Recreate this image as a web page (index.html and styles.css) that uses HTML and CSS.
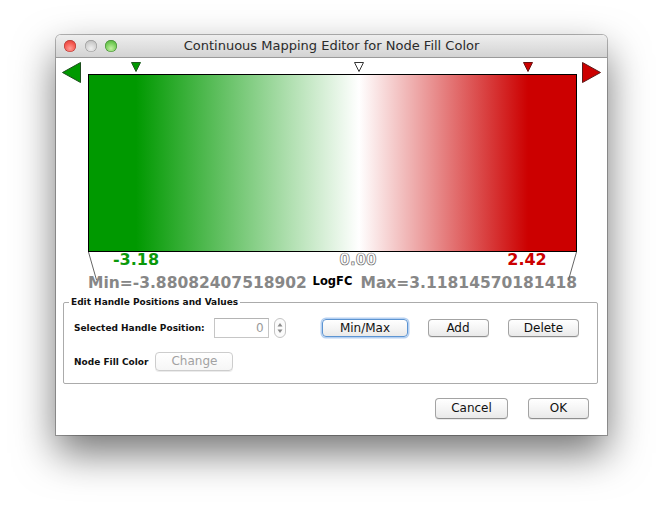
FILE: index.html
```html
<!DOCTYPE html>
<html>
<head>
<meta charset="utf-8">
<link rel="stylesheet" href="styles.css">
</head>
<body>
<div class="window">
  <div class="titlebar">
    <div class="lights">
      <span class="light red"></span>
      <span class="light gray"></span>
      <span class="light green"></span>
    </div>
    <div class="title">Continuous Mapping Editor for Node Fill Color</div>
  </div>
  <div class="editor">
    <div class="arrow-col left">
      <svg class="arrow" width="19" height="21" viewBox="0 0 19 21"><polygon points="18.5,0.5 18.5,20.5 0.5,10.5" fill="#009900" stroke="#1d4d1d" stroke-width="1"/></svg>
    </div>
    <div class="slider">
      <div class="handles">
        <svg class="handle" style="left:43px" width="10" height="10" viewBox="0 0 10 10"><polygon points="0.5,0.5 9.5,0.5 5,9.5" fill="#009900" stroke="#1f5a1f"/></svg>
        <svg class="handle" style="left:266px" width="10" height="10" viewBox="0 0 10 10"><polygon points="0.5,0.5 9.5,0.5 5,9.5" fill="#ffffff" stroke="#333"/></svg>
        <svg class="handle" style="left:435px" width="10" height="10" viewBox="0 0 10 10"><polygon points="0.5,0.5 9.5,0.5 5,9.5" fill="#cc0000" stroke="#6a1010"/></svg>
      </div>
      <div class="gradient"></div>
      <div class="values">
        <svg class="guides" width="489" height="30" viewBox="0 0 489 30"><line x1="0.5" y1="0" x2="8.5" y2="28" stroke="#666" stroke-width="1"/><line x1="488.5" y1="0" x2="480.5" y2="28" stroke="#666" stroke-width="1"/></svg>
        <span class="val green" style="left:48px">-3.18</span>
        <span class="val outline" style="left:270px">0.00</span>
        <span class="val red" style="left:439px">2.42</span>
      </div>
      <div class="range">
        <span class="min">Min=-3.88082407518902</span>
        <span class="attr">LogFC</span>
        <span class="max">Max=3.11814570181418</span>
      </div>
    </div>
    <div class="arrow-col right">
      <svg class="arrow" width="19" height="21" viewBox="0 0 19 21"><polygon points="0.5,0.5 0.5,20.5 18.5,10.5" fill="#cc0000" stroke="#5e1a1a" stroke-width="1"/></svg>
    </div>
  </div>
  <fieldset class="group">
    <legend>Edit Handle Positions and Values</legend>
    <div class="row">
      <span class="label">Selected Handle Position:</span>
      <div class="field">0</div>
      <div class="spinner">
        <svg width="12" height="20" viewBox="0 0 12 20"><polygon points="6,5 8.5,8.5 3.5,8.5" fill="#8a8a8a"/><polygon points="3.5,11.5 8.5,11.5 6,15" fill="#8a8a8a"/></svg>
      </div>
      <div class="actions">
        <div class="btn focus w-minmax">Min/Max</div>
        <div class="btn w-add">Add</div>
        <div class="btn w-delete">Delete</div>
      </div>
    </div>
    <div class="row row2">
      <span class="label">Node Fill Color</span>
      <div class="btn disabled w-change">Change</div>
    </div>
  </fieldset>
  <div class="footer">
    <div class="btn big w-cancel">Cancel</div>
    <div class="btn big w-ok">OK</div>
  </div>
</div>
</body>
</html>
```
FILE: styles.css
```css
* { box-sizing: border-box; }
html, body { margin: 0; padding: 0; background: #ffffff; }
body {
  width: 664px;
  height: 514px;
  overflow: hidden;
  font-family: "DejaVu Sans", sans-serif;
  padding-top: 35px;
  padding-left: 56px;
}
.window {
  width: 551px;
  height: 400px;
  background: #ffffff;
  border-radius: 5px 5px 0 0;
  box-shadow: 0 0 0 1px rgba(0,0,0,0.28), 0 18px 40px rgba(0,0,0,0.55);
}
.titlebar {
  position: relative;
  height: 23px;
  display: flex;
  align-items: center;
  background: linear-gradient(#eeeeee, #d3d3d3);
  border-bottom: 1px solid #9a9a9a;
  border-radius: 5px 5px 0 0;
}
.lights {
  display: flex;
  gap: 8.5px;
  padding-left: 8px;
}
.light {
  width: 12px;
  height: 12px;
  border-radius: 50%;
  display: block;
}
.light.red {
  background: radial-gradient(circle at 50% 70%, #ff9c95 0%, #f5574f 55%, #c8342e 100%);
  box-shadow: inset 0 0 0 0.5px #a53632;
}
.light.gray {
  background: radial-gradient(circle at 50% 70%, #f0f0f0 0%, #cfcfcf 55%, #a9a9a9 100%);
  box-shadow: inset 0 0 0 0.5px #8f8f8f;
}
.light.green {
  background: radial-gradient(circle at 50% 70%, #c4f0a4 0%, #74cc57 55%, #3e9a2e 100%);
  box-shadow: inset 0 0 0 0.5px #3d7f30;
}
.title {
  position: absolute;
  left: 0;
  right: 0;
  text-align: center;
  font-size: 13px;
  color: #2b2b2b;
  line-height: 22px;
}
.editor {
  display: flex;
  height: 234px;
}
.arrow-col { flex: none; }
.arrow-col.left { width: 32px; padding: 4px 0 0 6px; }
.arrow-col.right { width: 30px; padding: 4px 0 0 5px; }
.arrow { display: block; }
.slider {
  width: 489px;
  flex: none;
}
.handles {
  position: relative;
  height: 16px;
}
.handle {
  position: absolute;
  top: 4px;
  display: block;
}
.gradient {
  height: 178px;
  border: 1px solid #000;
  background: linear-gradient(to right, #009900 0px, #009900 47px, #ffffff 270px, #cc0000 439px, #cc0000 100%);
}
.values {
  position: relative;
  height: 22px;
}
.guides {
  position: absolute;
  left: 0;
  top: 0;
}
.val {
  position: absolute;
  top: 0;
  transform: translateX(-50%);
  font-size: 16px;
  line-height: 16px;
  font-weight: bold;
  white-space: nowrap;
}
.val.green { color: #0a990a; }
.val.red { color: #cc0000; }
.val.outline {
  font-size: 15px;
  color: #ffffff;
  -webkit-text-stroke: 0.7px #6e6e6e;
}
.range {
  height: 18px;
  display: grid;
  grid-template-columns: 1fr auto 1fr;
  align-items: start;
  color: #878787;
  font-weight: bold;
  font-size: 15.5px;
  line-height: 18px;
  white-space: nowrap;
}
.range .min { justify-self: start; }
.range .max { justify-self: end; }
.range .attr {
  color: #000;
  font-size: 11.5px;
  margin-top: -2px;
  padding: 0 4px;
}
.group {
  margin: 4px 9px 0 7px;
  border: 1px solid #ababab;
  border-radius: 2px;
  padding: 10px 18px 12px 10px;
  min-width: 0;
}
.group legend {
  font-size: 9px;
  font-weight: bold;
  line-height: 12px;
  padding: 0 2px;
  margin-left: -5px;
  color: #111;
}
.row {
  display: flex;
  align-items: center;
  height: 20px;
}
.row2 {
  margin-top: 14px;
  height: 19px;
}
.label {
  font-size: 9px;
  font-weight: bold;
  color: #111;
  white-space: nowrap;
}
.field {
  margin-left: 9px;
  width: 55px;
  height: 20px;
  border: 1px solid #c6c6c6;
  border-top-color: #b4b4b4;
  text-align: right;
  padding-right: 4px;
  font-size: 12px;
  line-height: 18px;
  color: #9a9a9a;
}
.spinner {
  margin-left: 5px;
  width: 12px;
  height: 20px;
  border: 1px solid #c4c4c4;
  border-radius: 6px;
  background: #fbfbfb;
  position: relative;
  overflow: hidden;
}
.spinner svg { position: absolute; left: -1px; top: -1px; }
.actions {
  margin-left: auto;
  display: flex;
  gap: 19.5px;
}
.btn {
  height: 18px;
  border: 1px solid #a3a3a3;
  border-bottom-color: #8e8e8e;
  border-radius: 4px;
  background: linear-gradient(#ffffff, #f5f5f5 50%, #e9e9e9 100%);
  box-shadow: 0 1px 0 rgba(0,0,0,0.08);
  font-size: 12px;
  line-height: 16px;
  text-align: center;
  color: #111;
  white-space: nowrap;
}
.btn.focus {
  border-color: #5c94d2;
  box-shadow: 0 0 0 1.5px rgba(120,170,230,0.55);
}
.btn.disabled {
  height: 19px;
  line-height: 17px;
  border-color: #cdcdcd;
  color: #a2a2a2;
  background: linear-gradient(#ffffff, #f6f6f6);
  margin-left: 7px;
}
.btn.big {
  height: 21px;
  line-height: 19px;
}
.w-minmax { width: 86px; }
.w-add { width: 61px; }
.w-delete { width: 71px; }
.w-change { width: 78px; }
.w-cancel { width: 73px; }
.w-ok { width: 61px; }
.footer {
  margin-top: 14px;
  padding-right: 18px;
  display: flex;
  justify-content: flex-end;
  gap: 20px;
}
```
